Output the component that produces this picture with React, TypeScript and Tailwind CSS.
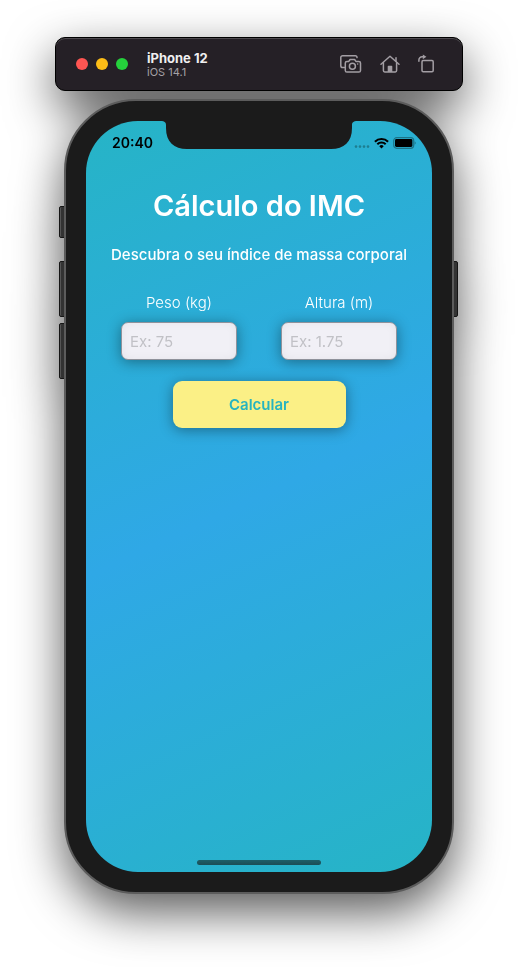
import React, { useState } from "react";

function ScreenshotIcon() {
  return (
    <svg width="22" height="18" viewBox="0 0 22 18" fill="none" stroke="currentColor" strokeWidth="1.5" strokeLinejoin="round" strokeLinecap="round">
      <path d="M4.5 12.5H2.6A1.8 1.8 0 0 1 .8 10.7V2.6A1.8 1.8 0 0 1 2.6.8h12.6A1.6 1.6 0 0 1 17 2.6" />
      <path d="M6.9 6.4h1.9l1.3-1.9h4.5l1.3 1.9h3a1.6 1.6 0 0 1 1.6 1.6v7.4a1.6 1.6 0 0 1-1.6 1.6h-12a1.6 1.6 0 0 1-1.6-1.6V8a1.6 1.6 0 0 1 1.6-1.6Z" />
      <circle cx="12.4" cy="11.3" r="3" />
      <path d="M17.6 8.9h.1" />
    </svg>
  );
}

function HomeIcon() {
  return (
    <svg width="20" height="18" viewBox="0 0 20 18" fill="none" stroke="currentColor" strokeWidth="1.5" strokeLinejoin="round" strokeLinecap="round">
      <path d="M1 9.2 10 1.2l9 8" />
      <path d="M16 6.2V2.8" />
      <path d="M3.4 7.6v8a1.3 1.3 0 0 0 1.3 1.3h10.6a1.3 1.3 0 0 0 1.3-1.3v-8" />
      <path d="M7.7 17v-5.6a.7.7 0 0 1 .7-.7h3.2a.7.7 0 0 1 .7.7V17Z" fill="currentColor" stroke="none" />
    </svg>
  );
}

function RotateIcon() {
  return (
    <svg width="17" height="20" viewBox="0 0 17 20" fill="none" stroke="currentColor" strokeWidth="1.5" strokeLinejoin="round" strokeLinecap="round">
      <rect x="4" y="6.5" width="11.2" height="11.2" rx="1.2" />
      <path d="M.9 7.2V6a3.2 3.2 0 0 1 3.2-3.2h1.8" />
      <path d="M4.8.4 8.4 2.8 4.8 5.2Z" fill="currentColor" stroke="none" />
    </svg>
  );
}

function Toolbar() {
  return (
    <header className="flex h-[54px] items-center rounded-[10px] border border-black bg-[#252026] pr-[27px] pb-px pl-5 shadow-[inset_0_1px_0_#4d494e]">
      <div className="flex gap-2">
        <button type="button" aria-label="Fechar" className="size-3 rounded-full bg-[#ff5552]" />
        <button type="button" aria-label="Minimizar" className="size-3 rounded-full bg-[#fdbd17]" />
        <button type="button" aria-label="Ampliar" className="size-3 rounded-full bg-[#25d13c]" />
      </div>
      <div className="ml-[19px] grow">
        <p className="text-[13px] leading-4 font-bold text-[#f0eff0]">iPhone 12</p>
        <p className="text-[11px] leading-3 text-[#a5a2a6]">iOS 14.1</p>
      </div>
      <div className="flex items-center gap-[18px] text-[#a39ea4]">
        <button type="button" aria-label="Captura de tela"><ScreenshotIcon /></button>
        <button type="button" aria-label="Início"><HomeIcon /></button>
        <button type="button" aria-label="Girar"><RotateIcon /></button>
      </div>
    </header>
  );
}

function StatusBar() {
  return (
    <div className="flex h-11 items-center justify-between pr-4 pl-[26px] text-black">
      <span className="text-[14px] leading-5 font-semibold">20:40</span>
      <div className="flex items-center gap-1">
        <svg width="16" height="12" viewBox="0 0 16 12" fill="#1d7e90">
          <circle cx="2" cy="9.6" r="1.3" />
          <circle cx="6" cy="9.6" r="1.3" />
          <circle cx="10" cy="9.6" r="1.3" />
          <circle cx="14" cy="9.6" r="1.3" />
        </svg>
        <svg width="15" height="12" viewBox="0 0 15 12" fill="none" stroke="currentColor" strokeWidth="2">
          <path d="M.9 4.7a9.3 9.3 0 0 1 13.2 0" />
          <path d="M3.3 7.3a5.9 5.9 0 0 1 8.4 0" />
          <path d="M7.5 11.4 5.3 9.2a3.1 3.1 0 0 1 4.4 0Z" fill="currentColor" stroke="none" />
        </svg>
        <svg width="23" height="12" viewBox="0 0 23 12">
          <rect x=".7" y=".7" width="20" height="10.6" rx="3" fill="none" stroke="#1c7488" strokeWidth="1.2" />
          <rect x="2" y="2" width="17.4" height="8" rx="1.4" fill="#000" />
          <path d="M21.6 4.2a2 2 0 0 1 0 3.6Z" fill="#1c7488" />
        </svg>
      </div>
    </div>
  );
}

type FieldProps = {
  id: string;
  label: string;
  placeholder: string;
  value: string;
  onChange: (value: string) => void;
};

function Field({ id, label, placeholder, value, onChange }: FieldProps) {
  return (
    <div className="flex flex-1 flex-col px-[22px]">
      <label htmlFor={id} className="text-center text-[15px] leading-5 font-light text-white">
        {label}
      </label>
      <input
        id={id}
        inputMode="decimal"
        placeholder={placeholder}
        value={value}
        onChange={(event) => onChange(event.target.value)}
        className="mt-[9px] h-[38px] w-full rounded-[7px] border border-[#8f929b] bg-[#f1f0f6] px-2 text-[15px] text-[#222] shadow-[0_2px_14px_rgba(0,0,0,0.38),inset_0_0_10px_rgba(0,0,0,0.05)] placeholder:text-[#c1c1c6]"
      />
    </div>
  );
}

function CalculatorScreen() {
  const [weight, setWeight] = useState("");
  const [height, setHeight] = useState("");

  return (
    <div className="relative aspect-[346/751] overflow-hidden rounded-[52px] bg-[linear-gradient(155deg,#26b4c6_0%,#2fa8e6_50%,#26b4c6_100%)]">
      <svg className="absolute top-0 left-1/2 -translate-x-1/2" width="196" height="29" viewBox="0 0 196 29" fill="#1b1b1b">
        <path d="M0 0h196c-3 0-5 1-5 4v3c0 14-8 21-21 21H26C13 28 5 21 5 7V4C5 1 3 0 0 0Z" />
      </svg>
      <StatusBar />
      <h1 className="mt-[21px] text-center text-[29px] leading-10 font-semibold text-white">Cálculo do IMC</h1>
      <p className="mt-[19px] text-center text-[15px] leading-5 font-medium text-white">
        Descubra o seu índice de massa corporal
      </p>
      <form onSubmit={(event) => event.preventDefault()}>
        <div className="mt-7 flex px-[13px]">
          <Field id="peso" label="Peso (kg)" placeholder="Ex: 75" value={weight} onChange={setWeight} />
          <Field id="altura" label="Altura (m)" placeholder="Ex: 1.75" value={height} onChange={setHeight} />
        </div>
        <button
          type="submit"
          className="mx-auto mt-[21px] block h-[47px] w-1/2 rounded-[9px] bg-[#fbf086] pt-px text-[15px] font-semibold text-[#26b4c0] shadow-[0_2px_14px_rgba(0,0,0,0.38)]"
        >
          Calcular
        </button>
      </form>
      <div className="absolute bottom-[7px] left-1/2 h-[5px] w-[124px] -translate-x-1/2 rounded-full bg-linear-to-b from-[#1d5f69] to-[#1c4d55]" />
    </div>
  );
}

const sideButton =
  "absolute w-[7px] rounded-[2px] border border-[#151515] bg-[#333] shadow-[inset_1px_0_0_#555]";

function Phone() {
  return (
    <div className="relative mx-[9px] mt-2">
      <span className={`${sideButton} top-[107px] -left-[5px] h-8`} />
      <span className={`${sideButton} top-[162px] -left-[5px] h-14`} />
      <span className={`${sideButton} top-[224px] -left-[5px] h-14`} />
      <span className={`${sideButton} top-[162px] -right-[4px] h-14`} />
      <div className="relative rounded-[72px] border-2 border-[#5c5c5c] bg-[#1b1b1b] p-5">
        <CalculatorScreen />
      </div>
    </div>
  );
}

export default function App() {
  return (
    <div className="min-h-screen overflow-hidden bg-white font-['Inter','Liberation_Sans',sans-serif]">
      <main className="mx-auto max-w-[518px] px-[55px] pt-[37px] pb-[74px] drop-shadow-[0_18px_24px_rgba(0,0,0,0.65)]">
        <Toolbar />
        <Phone />
      </main>
    </div>
  );
}
